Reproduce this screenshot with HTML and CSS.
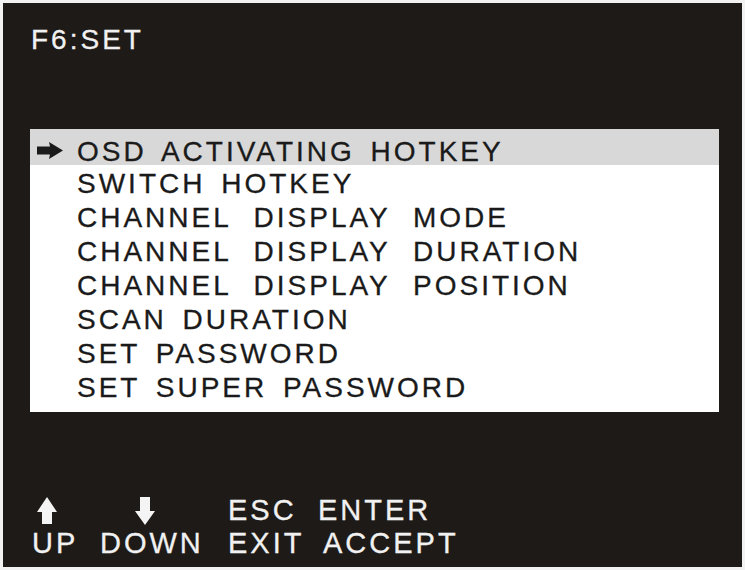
FILE: index.html
```html
<!DOCTYPE html>
<html>
<head>
<meta charset="utf-8">
<title>F6:SET</title>
<link rel="stylesheet" href="styles.css">
</head>
<body>
<div class="screen">
  <div class="title">F6:SET</div>
  <div class="menu">
    <div class="item active">
      <span class="mark"><svg class="pointer" width="26" height="17" viewBox="0 0 26 17"><polygon points="0,4.5 13,4.5 12,0 26,8.5 12,17 13,12.5 0,12.5"/></svg></span>
      <span class="label">OSD ACTIVATING HOTKEY</span>
    </div>
    <div class="item"><span class="mark"></span><span class="label">SWITCH HOTKEY</span></div>
    <div class="item"><span class="mark"></span><span class="label wide">CHANNEL DISPLAY MODE</span></div>
    <div class="item"><span class="mark"></span><span class="label wide">CHANNEL DISPLAY DURATION</span></div>
    <div class="item"><span class="mark"></span><span class="label wide">CHANNEL DISPLAY POSITION</span></div>
    <div class="item"><span class="mark"></span><span class="label">SCAN DURATION</span></div>
    <div class="item"><span class="mark"></span><span class="label">SET PASSWORD</span></div>
    <div class="item"><span class="mark"></span><span class="label">SET SUPER PASSWORD</span></div>
  </div>
  <div class="keys">
    <div class="cell glyph up"><svg width="20" height="27" viewBox="0 0 20 27"><polygon points="10,0 20,15 15,15 15,27 5,27 5,15 0,15"/></svg></div>
    <div class="cell glyph down"><svg width="20" height="28" viewBox="0 0 20 28"><polygon points="5,0 15,0 15,14 20,14 10,28 0,14 5,14"/></svg></div>
    <div class="cell">ESC</div>
    <div class="cell">ENTER</div>
    <div class="cell">UP</div>
    <div class="cell">DOWN</div>
    <div class="cell">EXIT</div>
    <div class="cell accept">ACCEPT</div>
  </div>
</div>
</body>
</html>
```

FILE: styles.css
```css
html, body {
  margin: 0;
  padding: 0;
  background: #f2f2f2;
}

.screen {
  box-sizing: border-box;
  width: 739px;
  height: 564px;
  margin: 3px 0 0 3px;
  background: #1e1a17;
  display: flex;
  flex-direction: column;
  padding: 20px 0 7px 0;
  font-family: "Liberation Sans", Arial, sans-serif;
  color: #f1f1f1;
  -webkit-text-stroke: 0.3px currentColor;
}

.title {
  font-size: 28px;
  line-height: 34px;
  letter-spacing: 3px;
  padding-left: 28px;
}

.menu {
  box-sizing: border-box;
  width: 689px;
  margin: 72px 0 0 27px;
  background: #ffffff;
  color: #1a1a1a;
  padding-bottom: 7px;
  font-size: 28px;
  letter-spacing: 3px;
  word-spacing: 5px;
}

.item {
  display: flex;
  line-height: 34px;
  height: 34px;
}

.item.active {
  background: #d8d8d8;
  height: 27px;
  line-height: 27px;
  padding-top: 9px;
  margin-bottom: 2px;
}

.mark {
  flex: 0 0 47px;
  display: flex;
  align-items: center;
}

.pointer {
  margin-left: 7px;
  margin-top: -3px;
  fill: #1a1a1a;
}

.label {
  white-space: nowrap;
}

.label.wide {
  word-spacing: 12px;
}

.keys {
  margin-top: auto;
  padding-left: 29px;
  display: grid;
  grid-template-columns: 68px 128px 90px auto;
  grid-template-rows: 33px 33px;
  font-size: 29px;
  line-height: 33px;
  letter-spacing: 3px;
}

.cell {
  white-space: nowrap;
}

.glyph {
  display: flex;
  align-items: center;
}

.glyph svg {
  fill: #f4f4f4;
}

.glyph.up svg {
  margin-left: 5px;
}

.glyph.down svg {
  margin-left: 35px;
}

.accept {
  padding-left: 5px;
}
```
